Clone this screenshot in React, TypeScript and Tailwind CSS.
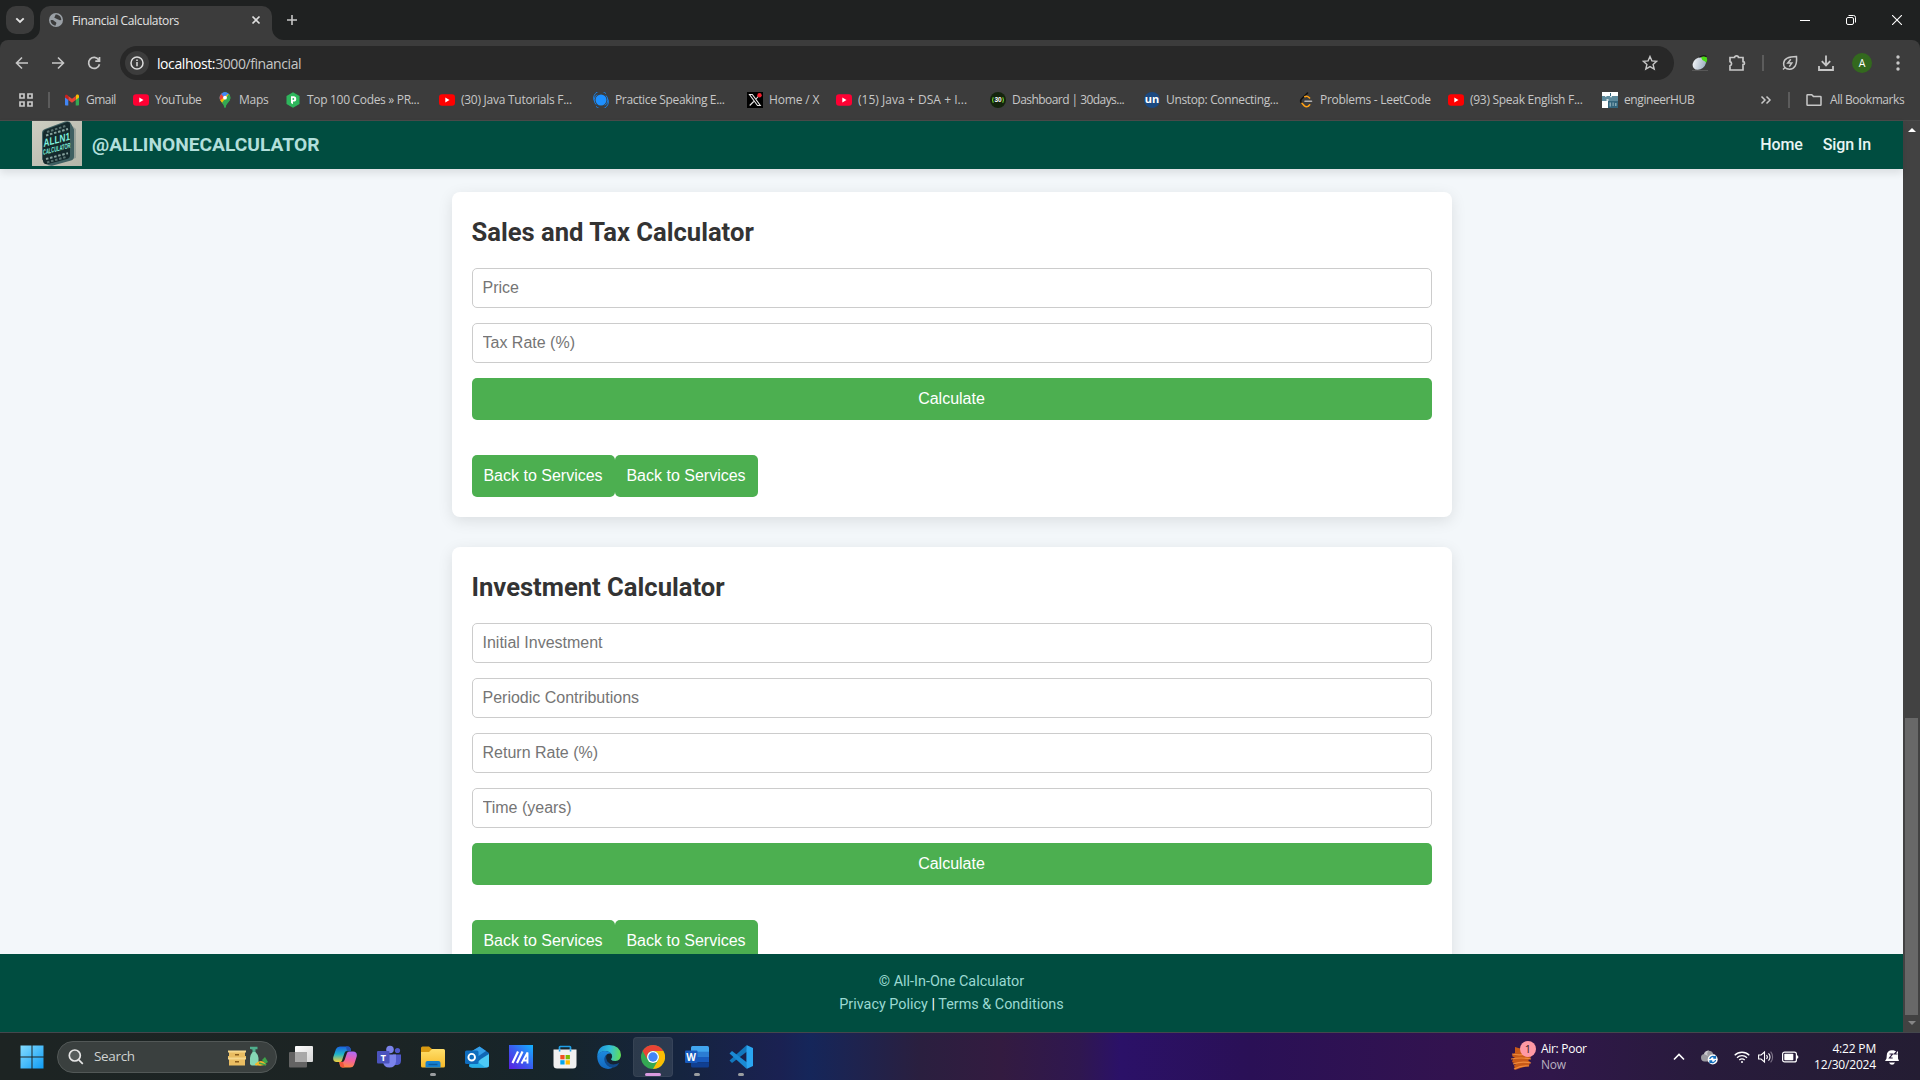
import React from "react";

type Kids = { children: React.ReactNode };

const UI = "font-['Open_Sans','Noto_Sans',sans-serif]";

/* ---------- browser icons ---------- */
const Stroke = ({ children, s = 16, w = 1.6, c = "#c7c7c7", vb = "0 0 16 16" }: Kids & { s?: number; w?: number; c?: string; vb?: string }) => (
  <svg width={s} height={s} viewBox={vb} fill="none" stroke={c} strokeWidth={w} className="block shrink-0">
    {children}
  </svg>
);

const Globe = () => (
  <svg width="14" height="14" viewBox="0 0 14 14" className="block shrink-0">
    <circle cx="7" cy="7" r="7" fill="#9aa0a6" />
    <path d="M1.6 7.2c1.6-.4 3 .1 3.900 1 .9.9 1.700.7 1.900 1.900.1.900-.8 1.200-.7 2.500C3.800 12.300 1.500 10 1.600 7.200zM6.600 1.500c-.6 1-.2 1.500-1 2.200-.5.500-.1 1.500.9 1.500 1 .1 1 .9 2 1.100 1.200.2 1.300 1 2.400 1 .8 0 1-.3 1.400-.5C12.300 3.800 9.700 1.300 6.600 1.500z" fill="#3c3c3c" />
  </svg>
);

const YT = ({ c = "#ff0033" }: { c?: string }) => (
  <svg width="16" height="16" viewBox="0 0 16 16" className="block shrink-0">
    <rect x="0" y="2.200" width="16" height="11.600" rx="3" fill={c} />
    <path d="M6.300 5.600v4.800l4.200-2.400z" fill="#fff" />
  </svg>
);

const Gmail = () => (
  <svg width="16" height="16" viewBox="0 0 16 16" className="block shrink-0">
    <path d="M1 4.500v8.300c0 .4.300.7.700.7h2.600V7z" fill="#4285f4" />
    <path d="M15 4.500v8.300c0 .4-.3.700-.7.700h-2.600V7z" fill="#34a853" />
    <path d="M11.700 4v4L15 5.500V4c0-1.500-1.600-2-2.600-1.200z" fill="#fbbc04" />
    <path d="M4.300 8V4L8 6.800 11.700 4v4L8 10.800z" fill="#ea4335" />
    <path d="M1 4v1.500L4.300 8V4l-.7-.8C2.600 2.400 1 2.700 1 4z" fill="#c5221f" />
  </svg>
);

const Maps = () => (
  <svg width="16" height="16" viewBox="0 0 16 16" className="block shrink-0">
    <defs>
      <clipPath id="pin"><path d="M8 0.300a5.400 5.400 0 0 0-5.400 5.400c0 4 4 5 4.700 9.300.1.900 1.300.9 1.400 0 .7-4.300 4.700-5.300 4.700-9.300A5.400 5.400 0 0 0 8 .3z" /></clipPath>
    </defs>
    <g clipPath="url(#pin)">
      <rect width="16" height="16" fill="#34a853" />
      <path d="M0 0h16L8 6 3 9H0z" fill="#4285f4" />
      <path d="M0 0h5l3 5-5 4H0z" fill="#ea4335" />
      <path d="M4 0h12v2L8 6 4.500 2.500z" fill="#4285f4" />
      <path d="M2 9.500L11 2l1.500 1-7.500 9z" fill="#fbbc04" />
      <path d="M12 2l4 0v14H6l-2-4z" fill="#34a853" />
    </g>
    <circle cx="8" cy="5.700" r="1.900" fill="#fff" />
  </svg>
);

const Prep = () => (
  <svg width="16" height="16" viewBox="0 0 16 16" className="block shrink-0">
    <path d="M8 .3l6.500 3.700v8L8 15.700 1.500 12V4z" fill="#2eb65c" />
    <path d="M6 4.300h2.600a2.600 2.600 0 0 1 0 5.300H8v2.600L6 11z" fill="#fff" />
    <circle cx="8.300" cy="7" r=".9" fill="#2eb65c" />
  </svg>
);

const Swirl = () => (
  <svg width="16" height="16" viewBox="0 0 16 16" className="block shrink-0">
    <circle cx="8" cy="8" r="5.500" fill="#1e90ff" />
    <path d="M13 1.700A7 7 0 0 0 1 8.500M3 14.300A7 7 0 0 0 15 7.500M4 2.700A6.500 6.500 0 0 0 3 12.500M12 13.300A6.500 6.500 0 0 0 13 3.500" fill="none" stroke="#1b7ee0" strokeWidth="1" />
  </svg>
);

const XIcon = () => (
  <svg width="16" height="16" viewBox="0 0 16 16" className="block shrink-0">
    <rect width="16" height="16" fill="#000" />
    <path d="M2.500 2.500h2.800l8 11h-2.800zM13 2.500L9 7M6.700 9.500l-4 4" fill="none" stroke="#e8e8e8" strokeWidth="1.100" />
    <circle cx="12.500" cy="3.200" r="2.200" fill="#f4212e" />
  </svg>
);

const Badge30 = () => (
  <svg width="16" height="16" viewBox="0 0 16 16" className="block shrink-0">
    <circle cx="8" cy="8" r="8" fill="#14240d" />
    <path d="M3.300 5.300q-1.500 2.700 0 5.400M12.700 5.300q1.500 2.700 0 5.400" fill="none" stroke="#6fd02c" strokeWidth="1.100" />
    <text x="8" y="10.300" textAnchor="middle" fontSize="6.500" fontWeight="700" fill="#fff" fontFamily="Liberation Sans">30</text>
  </svg>
);

const Un = () => (
  <svg width="16" height="16" viewBox="0 0 16 16" className="block shrink-0">
    <circle cx="8" cy="8" r="8" fill="#1c4980" />
    <text x="8" y="11" textAnchor="middle" fontSize="11" fontWeight="700" fill="#fff" fontFamily="Open Sans">un</text>
  </svg>
);

const Leet = () => (
  <svg width="16" height="16" viewBox="0 0 16 16" className="block shrink-0" fill="none" strokeWidth="1.600" strokeLinecap="round">
    <path d="M9.500 1L3.300 7.300q-1.300 1.700 0 3.200l1 1" stroke="#111" />
    <path d="M6.800 4.700Q9 3.500 11.600 6" stroke="#ffa116" />
    <path d="M4 11.300l2.400 2.600q2 1.600 4 .2l1.300-1.300" stroke="#ffa116" />
    <path d="M7 9.300h6.500" stroke="#b3b3b3" />
  </svg>
);

const Hub = () => (
  <svg width="16" height="16" viewBox="0 0 16 16" className="block shrink-0">
    <rect width="16" height="16" fill="#fff" />
    <path d="M0 4h16v5H0z" fill="#5d8a9c" />
    <path d="M3 4h1.500v1H3zM8 4h2v1.200H8zM4.500 7h2v2h-2z" fill="#cfdde2" />
    <path d="M6 9h10v7H6z" fill="#33657c" />
    <path d="M7.500 10.500h1.500v4H7.500zM10.500 10.500h1.200v3.500h-1.200zM13 11h1.500v3H13z" fill="#87a9b5" />
    <path d="M8 1h1v3H8z" fill="#33657c" />
  </svg>
);

const MouseIcon = () => (
  <svg width="16" height="16" viewBox="0 0 16 16" className="block shrink-0">
    <defs>
      <linearGradient id="ms" x1="0" y1="0" x2="1" y2="1"><stop offset="0" stopColor="#fff" /><stop offset="1" stopColor="#8fa3b8" /></linearGradient>
    </defs>
    <ellipse cx="7.300" cy="8.500" rx="7.200" ry="5.700" transform="rotate(-38 7.300 8.500)" fill="url(#ms)" />
    <path d="M9 2.200q3.500-2.200 5.800.4 1.200 2.400-.6 5.200-1-1.500-2.500-2.100-1.800-.7-2.700-3.500z" fill="#4bdc15" />
    <path d="M7.500 2.300q3.500-2.700 7-.7" fill="none" stroke="#111" strokeWidth="1.200" />
    <path d="M0 15.500h16" stroke="#575757" />
  </svg>
);

/* ---------- bookmarks ---------- */
const bookmarks: { t: string; w: string; tr: string; icon: React.ReactNode }[] = [
  { t: "Gmail", w: "w-[69px]", tr: "tracking-[-0.045em]", icon: <Gmail /> },
  { t: "YouTube", w: "w-[84px]", tr: "tracking-[-0.035em]", icon: <YT /> },
  { t: "Maps", w: "w-[68px]", tr: "tracking-[-0.024em]", icon: <Maps /> },
  { t: "Top 100 Codes » PR...", w: "w-[154px]", tr: "tracking-[-0.026em]", icon: <Prep /> },
  { t: "(30) Java Tutorials F...", w: "w-[154px]", tr: "tracking-[-0.022em]", icon: <YT c="#ff0000" /> },
  { t: "Practice Speaking E...", w: "w-[154px]", tr: "tracking-[-0.029em]", icon: <Swirl /> },
  { t: "Home / X", w: "w-[89px]", tr: "tracking-[-0.012em]", icon: <XIcon /> },
  { t: "(15) Java + DSA + I...", w: "w-[154px]", tr: "tracking-[0.003em]", icon: <YT /> },
  { t: "Dashboard | 30days...", w: "w-[154px]", tr: "tracking-[-0.046em]", icon: <Badge30 /> },
  { t: "Unstop: Connecting...", w: "w-[154px]", tr: "tracking-[-0.029em]", icon: <Un /> },
  { t: "Problems - LeetCode", w: "w-[150px]", tr: "tracking-[-0.024em]", icon: <Leet /> },
  { t: "(93) Speak English F...", w: "w-[154px]", tr: "tracking-[-0.024em]", icon: <YT c="#ff0000" /> },
  { t: "engineerHUB", w: "w-[98px]", tr: "tracking-[-0.034em]", icon: <Hub /> },
];

const Cell = ({ children }: Kids) => <span className="flex w-9 shrink-0 items-center justify-center">{children}</span>;

const TabStrip = () => (
  <div className="flex h-10 items-start bg-[#1f2121]">
    <div className="ml-1.5 mt-1.5 flex size-7 items-center justify-center rounded-[10px] bg-[#3c3c3c]">
      <Stroke s={12} w={1.900} c="#e3e3e3" vb="0 0 12 12"><path d="M2.300 4.300L6 8l3.700-3.700" /></Stroke>
    </div>
    <div className="relative ml-1.5 mt-1.5 flex h-[34px] w-[232px] items-start rounded-t-[10px] bg-[#3c3c3c]">
      <svg width="12" height="12" className="absolute -left-3 bottom-0"><path d="M12 0v12H0A12 12 0 0 0 12 0z" fill="#3c3c3c" /></svg>
      <svg width="12" height="12" className="absolute -right-3 bottom-0"><path d="M0 0v12h12A12 12 0 0 1 0 0z" fill="#3c3c3c" /></svg>
      <div className="flex h-7 w-full items-center">
        <span className="ml-[9px]"><Globe /></span>
        <span className="ml-[9px] mt-px w-[170px] whitespace-nowrap text-[12px] tracking-[-0.030em] text-[#e3e3e3]">Financial Calculators</span>
        <span className="ml-[9px]"><Stroke s={10} w={1.700} c="#dedede" vb="0 0 10 10"><path d="M1.500 1.500l7 7M8.500 1.500l-7 7" /></Stroke></span>
      </div>
    </div>
    <div className="ml-[15px] mt-[15px]"><Stroke s={10} w={1.600} vb="0 0 10 10"><path d="M5 0v10M0 5h10" /></Stroke></div>
    <div className="ml-auto mr-[18px] mt-[15px] flex gap-9">
      <Stroke s={10} w={1} c="#fff" vb="0 0 10 10"><path d="M0 5.500h10" /></Stroke>
      <Stroke s={10} w={1} c="#fff" vb="0 0 10 10"><rect x=".5" y="2.500" width="7" height="7" rx="1.500" /><path d="M2.500.5h5a2 2 0 0 1 2 2v5" /></Stroke>
      <Stroke s={10} w={1.100} c="#fff" vb="0 0 10 10"><path d="M0 0l10 10M10 0L0 10" /></Stroke>
    </div>
  </div>
);

const Toolbar = () => (
  <div className="bg-[#1f2121]">
    <div className="flex h-[46px] items-center rounded-t-lg bg-[#3c3c3c] pl-1">
      <Cell><Stroke><path d="M14 8H2.700M8 2.500L2.500 8 8 13.500" /></Stroke></Cell>
      <Cell><Stroke><path d="M2 8h11.300M8 2.500L13.500 8 8 13.500" /></Stroke></Cell>
      <Cell><Stroke w={1.700}><path d="M12.800 5A5.500 5.500 0 1 0 13.500 9.200M13.500 2v4.200H9.300" /></Stroke></Cell>
      <div className="ml-2 flex h-[34px] w-[1554px] items-center rounded-full bg-[#282828]">
        <span className="ml-[5px] flex size-6 items-center justify-center rounded-full bg-[#3c3c3c]">
          <Stroke s={16} w={1.500} c="#dcdcdc"><circle cx="8" cy="8" r="6" /><path d="M8 7v4.200M8 4.600v1.500" /></Stroke>
        </span>
        <span className="ml-2 whitespace-nowrap text-[14px] tracking-[-0.030em] text-[#c7c7c7]"><span className="text-white">localhost:</span>3000/financial</span>
        <span className="ml-auto mr-4">
          <Stroke s={16} w={1.400}><path d="M8 1.500l1.900 4.400 4.800.4-3.600 3.100 1.100 4.700L8 11.600l-4.200 2.500 1.100-4.700L1.300 6.300l4.800-.4z" /></Stroke>
        </span>
      </div>
      <span className="ml-[18px]"><MouseIcon /></span>
      <span className="ml-5"><Stroke s={18} w={1.700} vb="0 0 18 18"><path d="M2 3.500h4.500a2 1.700 0 0 1 4 0H15v4.200a1.500 1.500 0 0 1 0 3V16H2v-4.200a2.200 2.200 0 0 0 0-4.200z" /></Stroke></span>
      <span className="ml-4 h-4 w-[2px] bg-[#5c5c5c]" />
      <span className="ml-[18px]"><Stroke s={16} w={1.500}><path d="M14.500 1.500Q15.500 14 7.500 14.300 1.500 14 1.600 8.500 2 1.500 14.500 1.500z" /><path d="M1 14.500l2.500-2.500" /><path d="M8.800 4.300L5.800 8h4L7.300 11.600" /></Stroke></span>
      <span className="ml-5"><Stroke s={16} w={1.800}><path d="M8 .5v9.500M3.800 6.200L8 10.400l4.200-4.200M1 11v4h14v-4" /></Stroke></span>
      <span className="ml-[18px] flex size-5 items-center justify-center rounded-full bg-[#33691e] text-[10.500px] leading-none text-white">A</span>
      <span className="ml-[18px]"><svg width="16" height="16" viewBox="0 0 16 16" fill="#c7c7c7"><circle cx="8" cy="2" r="1.700" /><circle cx="8" cy="8" r="1.700" /><circle cx="8" cy="14" r="1.700" /></svg></span>
    </div>
  </div>
);

const BookmarkBar = () => (
  <div className="flex h-[35px] items-center border-b border-[#4a4a4a] bg-[#3c3c3c] pb-[6px] text-[12px] text-[#c7c7c7]">
    <span className="ml-[18px]"><Stroke s={16} w={1.700}><path d="M2 2h4v4H2zM10 2h4v4h-4zM2 10h4v4H2zM10 10h4v4h-4z" /></Stroke></span>
    <span className="ml-[14px] h-4 w-[2px] bg-[#5c5c5c]" />
    <div className="ml-[14px] flex">
      {bookmarks.map((b) => (
        <div key={b.t} className={`flex shrink-0 items-center gap-1.5 ${b.w}`}>
          {b.icon}
          <span className={`whitespace-nowrap ${b.tr}`}>{b.t}</span>
        </div>
      ))}
    </div>
    <span className="ml-auto"><Stroke s={12} w={1.500} vb="0 0 12 12"><path d="M1.500 2.500L5 6 1.500 9.500M6.500 2.500L10 6 6.500 9.500" /></Stroke></span>
    <span className="ml-4 h-4 w-[2px] bg-[#5c5c5c]" />
    <span className="ml-4"><Stroke w={1.500}><path d="M1 12.700V3.300q0-.6.600-.6h4.100l1.700 1.700h7q.6 0 .6.600v7.700q0 .6-.6.600H1.600q-.6 0-.6-.6z" /></Stroke></span>
    <span className="ml-2 mr-[15px] w-[75px] whitespace-nowrap tracking-[-0.037em]">All Bookmarks</span>
  </div>
);

/* ---------- page ---------- */
const Logo = () => (
  <svg width="50" height="45" viewBox="0 0 50 45" className="block">
    <defs>
      <linearGradient id="lgb" x1="0" y1="0" x2="1" y2="1"><stop offset="0" stopColor="#cdcec2" /><stop offset="1" stopColor="#b4b6a9" /></linearGradient>
    </defs>
    <rect width="50" height="45" fill="url(#lgb)" />
    <path d="M38 3l6 5v29L19 44l-6-4z" fill="#7f8d88" opacity=".6" />
    <path d="M13 8L33 0.500q5-1 6 2l3 6v27q0 3-3 4l-18 5q-4 1-7-2l-4-4V12q0-3 3-4z" fill="#3f6062" />
    <path d="M13 9L35 1q3-.5 3 2V34q0 3-3 4l-19 5q-4 1-5-3V13q0-3 2-4z" fill="#152a2d" />
    <g transform="skewY(-15)" fontFamily="Liberation Sans" fontWeight="700" fill="#7ff0dc">
      <text x="11.500" y="29" fontSize="11" textLength="26.500" lengthAdjust="spacingAndGlyphs">ALLN1</text>
      <text x="11" y="37" fontSize="7.500" textLength="27.500" lengthAdjust="spacingAndGlyphs">CALCULATOR</text>
    </g>
    <g stroke="#89a5a0" strokeWidth="2" strokeDasharray="2.500 1.700">
      <path d="M14 14.500l22-6.500M14 38l22-5.800" />
      <path d="M15 11l20-6.500M15 41.500l20-5.800" opacity=".6" />
    </g>
  </svg>
);

const btn = "h-[42px] rounded-[5px] bg-[#4caf50] text-center text-white";

const Calculator = ({ title, fields }: { title: string; fields: string[] }) => (
  <section className="w-[1000px] shrink-0 rounded-lg bg-white p-5 shadow-[0_4px_15px_rgba(0,0,0,0.1)]">
    <h2 className="mb-4 h-10 font-['Roboto',sans-serif] text-[25.600px] font-bold leading-10 text-[#333]">{title}</h2>
    <form className="flex flex-col gap-[15px] font-['Liberation_Sans',Arial,sans-serif] text-base">
      {fields.map((f) => (
        <input key={f} placeholder={f} className="h-10 rounded-[5px] border border-[#ccc] bg-white px-2.5 placeholder:text-[#757575]" />
      ))}
      <button type="button" className={btn}>Calculate</button>
    </form>
    <div className="mt-[35px] flex font-['Liberation_Sans',Arial,sans-serif] text-base">
      <button className={`w-[143px] ${btn}`}>Back to Services</button>
      <button className={`w-[143px] ${btn}`}>Back to Services</button>
    </div>
  </section>
);

const Page = () => (
  <div className="flex h-[911px]">
    <div className="flex w-[1903px] flex-col font-['Roboto',sans-serif]">
      <header className="relative flex h-12 shrink-0 items-start bg-[#004d40] pl-8 shadow-[0_4px_8px_rgba(0,0,0,0.1)]">
        <Logo />
        <span className="ml-2.5 text-[19.200px] font-bold leading-[47px] text-[#b2dfdb]">@ALLINONECALCULATOR</span>
        <nav className="ml-auto mr-8 flex gap-5 text-base font-medium leading-[48px] tracking-[-0.008em] text-[#e8f5f3]">
          <a>Home</a>
          <a>Sign In</a>
        </nav>
      </header>
      <main className="flex min-h-0 flex-1 flex-col items-center gap-[30px] overflow-hidden bg-[#f3f7fa] pt-[23px]">
        <Calculator title="Sales and Tax Calculator" fields={["Price", "Tax Rate (%)"]} />
        <Calculator title="Investment Calculator" fields={["Initial Investment", "Periodic Contributions", "Return Rate (%)", "Time (years)"]} />
      </main>
      <footer className="h-[78px] shrink-0 bg-[#004d40] pt-4 text-center text-[14.400px] leading-[23px] text-[#9bd9d2]">
        <p>© All-In-One Calculator</p>
        <p>Privacy Policy <span className="text-white">|</span> Terms &amp; Conditions</p>
      </footer>
    </div>
    <div className="flex w-[17px] flex-col items-center bg-[#424242]">
      <svg width="8" height="4" className="mt-[7px] block"><path d="M0 4l4-4 4 4z" fill="#fff" /></svg>
      <div className="mt-auto h-[297px] w-[13px] bg-[#686868]" />
      <svg width="8" height="4" className="mb-[7px] mt-[6px] block"><path d="M0 0h8L4 4z" fill="#868686" /></svg>
    </div>
  </div>
);

/* ---------- taskbar ---------- */
const I = ({ children, s = 24 }: Kids & { s?: number }) => (
  <svg width={s} height={s} viewBox="0 0 24 24" className="block shrink-0">{children}</svg>
);

const Windows = () => (
  <I>
    <defs><linearGradient id="win" x1="0" y1="0" x2="1" y2="1"><stop offset="0" stopColor="#84dcff" /><stop offset="1" stopColor="#0f9cf5" /></linearGradient></defs>
    <path d="M0.500.5h11v11H.5zM12.500.5h11v11h-11zM.5 12.500h11v11H.5zM12.500 12.500h11v11h-11z" fill="url(#win)" />
  </I>
);

const TaskView = () => (
  <I>
    <defs><linearGradient id="tv" x1="0" y1="0" x2="1" y2="1"><stop offset="0" stopColor="#fff" /><stop offset="1" stopColor="#d5d5d5" /></linearGradient></defs>
    <rect x="0" y="7" width="18" height="15.500" rx="1" fill="#636363" />
    <rect x="6" y="1" width="18" height="16" rx="1" fill="url(#tv)" />
    <path d="M6 7h12v10H6z" fill="#a9a9a9" />
  </I>
);

const Copilot = () => (
  <I>
    <defs>
      <linearGradient id="cp1" x1="0" y1="0" x2="0" y2="1"><stop offset="0" stopColor="#1a62e0" /><stop offset=".5" stopColor="#1fb5c9" /><stop offset="1" stopColor="#f7d038" /></linearGradient>
      <linearGradient id="cp2" x1=".6" y1="0" x2=".4" y2="1"><stop offset="0" stopColor="#b06bf5" /><stop offset=".5" stopColor="#f05fa5" /><stop offset="1" stopColor="#ff8a3c" /></linearGradient>
    </defs>
    <path d="M7 1.500h8q2 0 2.500 2L18 6h-4q-2 0-2.500 2L9 15.500Q8.500 17 7 17H3.500Q-.5 17 .3 12L3 4q1-2.500 4-2.500z" fill="url(#cp1)" />
    <path d="M17 22.500H9.500q-2 0-2.500-2L6.300 17H9q2 0 2.600-2L14 8q.5-1.500 2-1.500h4q4.500 0 3.700 5L21 20q-1 2.500-4 2.500z" fill="url(#cp2)" />
    <path d="M15 1.500q2 0 2.500 2L18 6.300h-4L13 1.500z" fill="#2451b5" />
    <path d="M9.500 22.500q-2 0-2.500-2L6.300 17H10l1.500 5.500z" fill="#f0563c" />
  </I>
);

const Teams = () => (
  <I>
    <circle cx="13" cy="4.500" r="3.800" fill="#7b83eb" />
    <circle cx="20.500" cy="5.500" r="2.600" fill="#5059c9" />
    <path d="M16 9.500h8v6q0 4-3.500 4.500H16z" fill="#5059c9" />
    <path d="M6 9.500h13v7q-.4 6-6.500 6T6 16.500z" fill="#7b83eb" />
    <rect x="0" y="6" width="12.500" height="12.500" rx="1" fill="#4b53bc" />
    <text x="6.200" y="15.800" textAnchor="middle" fontSize="9.500" fontWeight="700" fill="#fff" fontFamily="Open Sans">T</text>
  </I>
);

const Explorer = () => (
  <I>
    <defs><linearGradient id="ex" x1="0" y1="0" x2="0" y2="1"><stop offset="0" stopColor="#ffdf6b" /><stop offset="1" stopColor="#f7b928" /></linearGradient></defs>
    <path d="M0 3q0-1.500 1.500-1.500H8L11 4h11v6H0z" fill="#d99a12" />
    <path d="M0 7h8l3-3h11.500Q24 4 24 5.500V21q0 1.500-1.500 1.500h-21Q0 22.500 0 21z" fill="url(#ex)" />
    <path d="M4.500 22.500V18q0-2 2-2h11q2 0 2 2v4.500z" fill="#1680d0" />
    <path d="M7.500 19.500h9" stroke="#0d5a9c" strokeWidth="1.500" />
  </I>
);

const Outlook = () => (
  <I>
    <path d="M4 8L14.500 1.500 24 8v12q0 2.500-2.500 2.500h-15Q4 22.500 4 20z" fill="#1066b5" />
    <path d="M7 6l7.500-4.500L21 6l-9 6z" fill="#35a0ea" />
    <path d="M24 9v11q0 2.500-2.500 2.500h-15L16 14z" fill="#4cc9f5" />
    <path d="M4 20q0 2.500 2.500 2.500h14L10 15z" fill="#26b0e8" />
    <rect x="0" y="5.500" width="13.500" height="13.500" rx="1.500" fill="#0f6cbd" />
    <circle cx="6.700" cy="12.200" r="3.300" fill="none" stroke="#fff" strokeWidth="1.900" />
  </I>
);

const MyAsus = () => (
  <I>
    <defs><linearGradient id="ma" x1="0" y1="1" x2="1" y2="0"><stop offset="0" stopColor="#5a1fe0" /><stop offset=".5" stopColor="#3a5cf0" /><stop offset="1" stopColor="#12b4ff" /></linearGradient></defs>
    <rect width="24" height="24" fill="url(#ma)" />
    <path d="M3.500 18L9 6.500M8 18l5.500-11.500" stroke="#fff" strokeWidth="2.200" />
    <path d="M12.500 18.500l6-11V18.500M15 15.500h3.500" fill="none" stroke="#fff" strokeWidth="1.900" />
  </I>
);

const Store = () => (
  <I>
    <path d="M6.500 7V2.200Q6.500 1.500 7.200 1.500h9.600q.7 0 .7.700V7" fill="none" stroke="#1fa0e8" strokeWidth="1.700" />
    <path d="M.5 4.500h23V20q0 3.500-3.500 3.500H4Q.5 23.500.5 20z" fill="#f1f1f1" />
    <path d="M5.800 4.500h1.600v2H5.800zM16.700 4.500h1.600v2h-1.600z" fill="#1fa0e8" />
    <path d="M7.300 10h4.300v4.300H7.300z" fill="#f25022" /><path d="M12.600 10h4.300v4.300h-4.300z" fill="#7fba00" />
    <path d="M7.300 15.200h4.300v4.300H7.300z" fill="#00a4ef" /><path d="M12.600 15.200h4.300v4.300h-4.300z" fill="#ffb900" />
  </I>
);

const Edge = () => (
  <I>
    <defs>
      <linearGradient id="ed1" x1="0" y1=".2" x2="1" y2=".3"><stop offset="0" stopColor="#1b8fdf" /><stop offset=".55" stopColor="#33bfd8" /><stop offset="1" stopColor="#5fdd5a" /></linearGradient>
      <linearGradient id="ed2" x1="0" y1="0" x2="0" y2="1"><stop offset="0" stopColor="#1c8ae0" /><stop offset="1" stopColor="#1368bd" /></linearGradient>
    </defs>
    <path d="M.2 11Q1 0 12 0q11.500.5 12 10-.2 5.500-5.500 6-3.700 0-4.500-1.500 2-2 .8-5Q12.500 6 8 6 2.500 6.500.2 11z" fill="url(#ed1)" />
    <path d="M.2 11Q2.500 6 8 6q4.500 0 6 2.500Q8 8 8 14q.5 7 8 8.500-2 1.500-5 1.400Q.5 23 .2 11z" fill="url(#ed2)" />
    <path d="M9.500 9.500Q6 12.500 8 17.500q3 5.500 9 5 4-1.500 5.300-4.500-8 3.500-12-1.500-2-3.500-.8-7z" fill="#114a8b" />
  </I>
);

const Chrome = () => (
  <I>
    <circle cx="12" cy="12" r="12" fill="#34a853" />
    <path d="M12 0A12 12 0 0 1 22.400 6H12a6 6 0 0 0-5.200 9L1.600 6A12 12 0 0 1 12 0z" fill="#ea4335" />
    <path d="M22.400 6A12 12 0 0 1 12 24l5.200-9A6 6 0 0 0 12 6z" fill="#fbbc04" />
    <circle cx="12" cy="12" r="6" fill="#fff" />
    <circle cx="12" cy="12" r="4.700" fill="#4285f4" />
  </I>
);

const Word = () => (
  <I>
    <path d="M6 2.500Q6 1 7.500 1h15Q24 1 24 2.500v5H6z" fill="#41a5ee" />
    <path d="M6 6.700h18v5.300H6z" fill="#2b7cd3" /><path d="M6 12h18v5.300H6z" fill="#185abd" />
    <path d="M6 17.300h18V21q0 1.500-1.500 1.500h-15Q6 22.500 6 21z" fill="#103f91" />
    <rect x="0" y="5.500" width="12.500" height="12.500" rx="1" fill="#185abd" />
    <text x="6.200" y="15.500" textAnchor="middle" fontSize="10" fontWeight="700" fill="#fff" fontFamily="Open Sans">W</text>
  </I>
);

const VSCode = () => (
  <I>
    <path d="M17.500.2L0.500 15.500 3 18 18 6.500z" fill="#1277bd" />
    <path d="M17.500 23.800L.5 8.500 3 6l15 11.500z" fill="#1a8ad4" />
    <path d="M18 .2L24 3v18l-6 2.800q-.6 0-.6-1V1.200q0-1 .6-1z" fill="#2aa6f2" />
  </I>
);

const apps: { id: string; icon: React.ReactNode; mark?: "idle" | "active" }[] = [
  { id: "taskview", icon: <TaskView /> },
  { id: "copilot", icon: <Copilot /> },
  { id: "teams", icon: <Teams /> },
  { id: "explorer", icon: <Explorer />, mark: "idle" },
  { id: "outlook", icon: <Outlook /> },
  { id: "myasus", icon: <MyAsus /> },
  { id: "store", icon: <Store /> },
  { id: "edge", icon: <Edge /> },
  { id: "chrome", icon: <Chrome />, mark: "active" },
  { id: "word", icon: <Word />, mark: "idle" },
  { id: "vscode", icon: <VSCode />, mark: "idle" },
];

const SearchArt = () => (
  <svg width="40" height="22" viewBox="0 0 40 22" className="block">
    <path d="M1 5h16v5H1zM0 10h18v3H0zM1 13h16v6.500H1z" fill="#e9bd62" />
    <path d="M0 4.500h18v2H0zM0 11.500h18v2H0z" fill="#f6d88d" />
    <path d="M7 8h4v1.500H7zM7 15h4v1.500H7z" fill="#8a5d1c" />
    <path d="M22 .8h7.500v2.500h-2V6h-3V3.500L22 3z" fill="#4fae8c" />
    <path d="M24.500 6h3q3 3 3 6v5.500q0 2-2 2h-4.500q-2 0-2-2V12q0-3 2.500-6z" fill="#86d7b4" />
    <path d="M34 14l3-3 3 5-3 2z" fill="#3ea34a" />
    <path d="M27 18q4-4 8-2.500l3.500 3q-5 2-11.500.500z" fill="#f3b72c" />
    <path d="M31 17l7 2" stroke="#3ea34a" strokeWidth="1.500" />
  </svg>
);

const Taskbar = () => (
  <div className="flex h-12 items-center border-t border-[#44474d] bg-[linear-gradient(90deg,#1d2423_0px,#1c2424_380px,#16252b_560px,#15243f_680px,#1a2152_780px,#15265a_810px,#2a1f3f_920px,#331b40_1000px,#2f1750_1080px,#2b1168_1120px,#2a1056_1250px,#32134f_1450px,#30174a_1550px,#281b3c_1700px,#241d33_1920px)] text-white">
    <span className="ml-5"><Windows /></span>
    <div className="ml-[13px] flex h-8 w-[220px] items-center rounded-full border border-[#525857] bg-[#3a403f]">
      <span className="ml-[10px]"><Stroke s={16} w={1.700} c="#e6e6e6"><circle cx="6.800" cy="6.500" r="5.500" fill="#565c5b" /><path d="M10.800 10.800l4 4" /></Stroke></span>
      <span className="ml-[10px] text-[13.500px] tracking-[-0.025em] text-[#cfd2d1]">Search</span>
      <span className="ml-auto mr-2"><SearchArt /></span>
    </div>
    <div className="ml-1 flex gap-1">
      {apps.map((a) => (
        <div key={a.id} className={`relative flex size-10 items-center justify-center rounded ${a.mark === "active" ? "border border-white/5 bg-white/10" : ""}`}>
          {a.icon}
          {a.mark === "idle" && <span className="absolute bottom-[1px] left-[17px] h-[3px] w-[6px] rounded-full bg-[#9a9da0]" />}
          {a.mark === "active" && <span className="absolute bottom-0 left-[11px] h-[3px] w-4 rounded-full bg-[#d99ae0]" />}
        </div>
      ))}
    </div>
    <div className="ml-auto flex items-center">
      <div className="relative">
        <svg width="24" height="28" viewBox="0 0 24 28" className="block">
          <path d="M4 4q7 3 14 1v7l2 1-1 3-2 1 2 2-1 4q-7 1-14 4l-1-5 2-1-4-2 1-3 2-1-3-2 1-2 2-1z" fill="#c95a18" />
          <path d="M1 11q9 2 18-1M0 16q10-2 20 0M2 21q9-3 18-1M3 26q8-4 15-3" fill="none" stroke="#f08a3c" strokeWidth="1.200" />
        </svg>
        <span className="absolute -top-[2px] left-[9px] flex size-4 items-center justify-center rounded-full bg-[#ff99a4] text-[11px] leading-none text-[#3a1a20]">1</span>
      </div>
      <div className="ml-[6px] w-[132px] text-[12px] leading-4 tracking-[-0.025em]">
        <p className="text-white">Air: Poor</p>
        <p className="text-[#b9b2c0]">Now</p>
      </div>
      <Stroke s={12} w={1.600} c="#fff" vb="0 0 12 12"><path d="M1 8.500L6 3.500l5 5" /></Stroke>
      <svg width="18" height="16" viewBox="0 0 18 16" className="ml-[15px] block">
        <path d="M4.500 12.500A3.800 3.800 0 0 1 4 5a5 5 0 0 1 9.300 0 4 4 0 0 1 1.500 7.500z" fill="#9b9aa0" />
        <path d="M4 5a5 5 0 0 1 5-3.500Q6 4 8 7z" fill="#c9c8cc" />
        <circle cx="12.700" cy="10.500" r="5" fill="#fff" />
        <path d="M9.800 10a3 3 0 0 1 5.200-1.500M15.600 11a3 3 0 0 1-5.200 1.500M15.500 6.800v2.200h-2.200M10 14.200V12h2.200" fill="none" stroke="#0f6cbd" strokeWidth="1.300" />
      </svg>
      <svg width="16" height="14" viewBox="0 0 16 14" className="ml-4 block" fill="none" stroke="#fff" strokeWidth="1.300">
        <path d="M.7 5.200a10.500 10.500 0 0 1 14.600 0M3 7.700a7 7 0 0 1 10 0M5.300 10a3.800 3.800 0 0 1 5.400 0" />
        <circle cx="8" cy="12" r="1" fill="#fff" stroke="none" />
      </svg>
      <svg width="16" height="14" viewBox="0 0 16 14" className="ml-[8px] block" fill="none" stroke="#fff" strokeWidth="1.100">
        <path d="M.6 5v4h2.500L6.500 12V2L3.100 5z" />
        <path d="M8.500 5a3 3 0 0 1 0 4M10.500 3.300a5.300 5.300 0 0 1 0 7.400" />
        <path d="M12.600 1.700a8 8 0 0 1 0 10.600" stroke="#7d7488" />
      </svg>
      <svg width="17" height="12" viewBox="0 0 17 12" className="ml-[8px] block">
        <rect x=".6" y="1.100" width="13.800" height="9.800" rx="2" fill="none" stroke="#fff" strokeWidth="1.200" />
        <rect x="2.300" y="2.800" width="9" height="6.400" rx=".8" fill="#fff" />
        <path d="M15 4.500h1q.7 1.500 0 3h-1z" fill="#fff" />
      </svg>
      <div className="ml-[7px] w-[70px] whitespace-nowrap text-right text-[12px] leading-4 tracking-[-0.015em]">
        <p>4:22 PM</p>
        <p>12/30/2024</p>
      </div>
      <svg width="14" height="16" viewBox="0 0 14 16" className="ml-[9px] mr-[21px] block">
        <path d="M1.800 6a5 5 0 0 1 5-4.800L13 1.500v8l1 2.500H0l1.500-2.500z" fill="#fff" />
        <path d="M4 13.500h6q-1 2.200-3 2.200T4 13.500z" fill="#fff" />
        <path d="M4.500 5h3l-3 4h3.200M9.500 1.500h3l-3 3.500h3" fill="none" stroke="#281b3c" strokeWidth="1.200" />
      </svg>
    </div>
  </div>
);

export default function App() {
  return (
    <div className={`h-[1080px] w-[1920px] overflow-hidden bg-[#3c3c3c] ${UI}`}>
      <TabStrip />
      <Toolbar />
      <BookmarkBar />
      <Page />
      <Taskbar />
    </div>
  );
}
